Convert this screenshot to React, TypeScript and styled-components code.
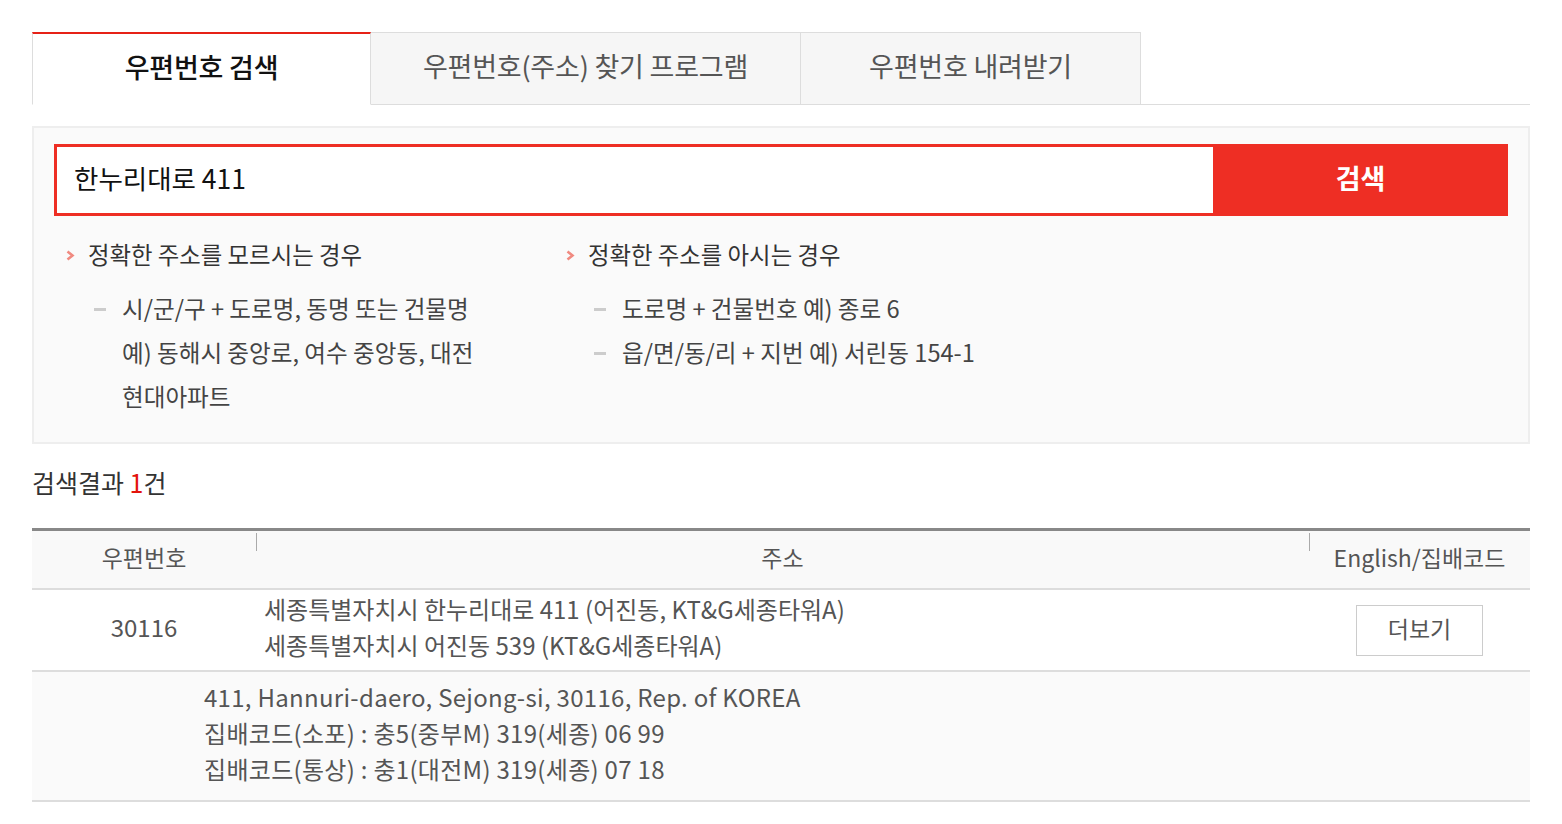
import React from 'react'
import styled, { createGlobalStyle } from 'styled-components'

const GlobalStyle = createGlobalStyle`
  body {
    margin: 0;
    background: #fff;
    font-family: "Noto Sans CJK KR", "Noto Sans", sans-serif;
    color: #333;
  }
`

const Page = styled.div`
  padding: 32px 32px 0;
`

const TabBar = styled.div`
  display: flex;
  border-bottom: 1px solid #ddd;
`

type tabProps = {
  active?: boolean
  w: number
}

const Tab = styled.div<tabProps>`
  width: ${(p) => p.w}px;
  height: ${(p) => (p.active ? 64 : 65)}px;
  padding-bottom: 6px;
  margin-bottom: -1px;
  display: flex;
  align-items: center;
  justify-content: center;
  box-sizing: content-box;
  font-size: 27px;
  letter-spacing: -0.2px;
  color: ${(p) => (p.active ? '#111' : '#555')};
  font-weight: ${(p) => (p.active ? 500 : 400)};
  background: ${(p) => (p.active ? '#fff' : '#f6f6f6')};
  border: 1px solid #ddd;
  border-top: ${(p) => (p.active ? '2px solid #e62117' : '1px solid #ddd')};
  border-bottom: 1px solid ${(p) => (p.active ? '#fff' : '#ddd')};
  & + & {
    border-left: none;
  }
`

const SearchPanel = styled.div`
  margin-top: 21px;
  border: 2px solid #eee;
  background: #fafafa;
  padding: 16px 20px 24px;
`

const SearchRow = styled.div`
  display: flex;
  height: 72px;
`

const Input = styled.div`
  flex: 1;
  background: #fff;
  border: 3px solid #ee2e24;
  border-right: none;
  display: flex;
  align-items: center;
  padding: 0 0 5px 17px;
  font-size: 26.5px;
  color: #111;
`

const SearchButton = styled.button`
  width: 295px;
  border: none;
  background: #ee2e24;
  color: #fff;
  font-family: inherit;
  font-size: 27px;
  font-weight: 700;
  padding: 0 0 5px;
`

const Hints = styled.div`
  display: grid;
  grid-template-columns: 500px 1fr;
  padding: 16px 0 0 12px;
`

const HintTitle = styled.div`
  display: flex;
  align-items: center;
  height: 44px;
  font-size: 23.4px;
  color: #333;
  margin-bottom: 10px;
`

const Chevron = styled.span`
  width: 22px;
  display: flex;
  align-items: center;
  padding-top: 3px;
`

const HintItem = styled.div`
  display: flex;
  font-size: 23.6px;
  line-height: 44px;
  color: #444;
  padding-left: 28px;
`

const Dash = styled.span`
  flex: none;
  width: 12px;
  height: 3px;
  background: #ccc;
  margin: 22px 16px 0 0;
`

const ResultTitle = styled.h2`
  margin: 24px 0 32px;
  font-size: 25px;
  font-weight: 400;
  color: #333;
  line-height: 28px;
`

const Count = styled.span`
  color: #e3140c;
`

const Table = styled.table`
  width: 100%;
  border-collapse: collapse;
  border-top: 3px solid #888;
  color: #555;
`

const Th = styled.th<{ sep?: boolean }>`
  position: relative;
  height: 52px;
  background: #f9f9f9;
  border-bottom: 2px solid #ddd;
  font-size: 23px;
  font-weight: 400;
  color: #555;
  text-align: center;
  padding: 0 0 5px;
  &::before {
    content: '';
    display: ${(p) => (p.sep ? 'block' : 'none')};
    position: absolute;
    left: 0;
    top: 2px;
    width: 1px;
    height: 18px;
    background: #aaa;
  }
`

const Td = styled.td<{ align?: string }>`
  height: 73px;
  border-bottom: 2px solid #ddd;
  font-size: 24px;
  text-align: ${(p) => p.align || 'center'};
  padding: 0 0 7px;
`

const AddressCell = styled(Td)`
  padding-left: 8px;
  line-height: 36px;
`

const DetailCell = styled.td`
  background: #fafafa;
  border-bottom: 2px solid #ddd;
  padding: 7px 0 13px 172px;
  font-size: 24px;
  line-height: 36px;
  letter-spacing: 0.3px;
  color: #555;
`

const MoreButton = styled.button`
  width: 127px;
  height: 51px;
  margin-top: 7px;
  border: 1px solid #ccc;
  background: #fff;
  font-family: inherit;
  font-size: 23px;
  color: #555;
  padding: 0 0 5px;
`

const ChevronIcon = () => (
  <svg width="9" height="11" viewBox="0 0 9 11">
    <path d="M1.5 1.5 L6.5 5.5 L1.5 9.5" fill="none" stroke="#f08a80" strokeWidth="2.6" />
  </svg>
)

const App = () => (
  <Page>
    <GlobalStyle />
    <TabBar>
      <Tab active w={337}>우편번호 검색</Tab>
      <Tab w={429}>우편번호(주소) 찾기 프로그램</Tab>
      <Tab w={339}>우편번호 내려받기</Tab>
    </TabBar>

    <SearchPanel>
      <SearchRow>
        <Input>한누리대로 411</Input>
        <SearchButton>검색</SearchButton>
      </SearchRow>
      <Hints>
        <div>
          <HintTitle>
            <Chevron>
              <ChevronIcon />
            </Chevron>
            정확한 주소를 모르시는 경우
          </HintTitle>
          <HintItem>
            <Dash />
            <span>
              시/군/구 + 도로명, 동명 또는 건물명
              <br />
              예) 동해시 중앙로, 여수 중앙동, 대전
              <br />
              현대아파트
            </span>
          </HintItem>
        </div>
        <div>
          <HintTitle>
            <Chevron>
              <ChevronIcon />
            </Chevron>
            정확한 주소를 아시는 경우
          </HintTitle>
          <HintItem>
            <Dash />
            <span>도로명 + 건물번호 예) 종로 6</span>
          </HintItem>
          <HintItem>
            <Dash />
            <span>읍/면/동/리 + 지번 예) 서린동 154-1</span>
          </HintItem>
        </div>
      </Hints>
    </SearchPanel>

    <ResultTitle>
      검색결과 <Count>1</Count>건
    </ResultTitle>

    <Table>
      <colgroup>
        <col style={{ width: 224 }} />
        <col />
        <col style={{ width: 221 }} />
      </colgroup>
      <thead>
        <tr>
          <Th>우편번호</Th>
          <Th sep>주소</Th>
          <Th sep>English/집배코드</Th>
        </tr>
      </thead>
      <tbody>
        <tr>
          <Td>30116</Td>
          <AddressCell align="left">
            세종특별자치시 한누리대로 411 (어진동, KT&amp;G세종타워A)
            <br />
            세종특별자치시 어진동 539 (KT&amp;G세종타워A)
          </AddressCell>
          <Td>
            <MoreButton>더보기</MoreButton>
          </Td>
        </tr>
        <tr>
          <DetailCell colSpan={3}>
            411, Hannuri-daero, Sejong-si, 30116, Rep. of KOREA
            <br />
            집배코드(소포) : 충5(중부M) 319(세종) 06 99
            <br />
            집배코드(통상) : 충1(대전M) 319(세종) 07 18
          </DetailCell>
        </tr>
      </tbody>
    </Table>
  </Page>
)

export default App
